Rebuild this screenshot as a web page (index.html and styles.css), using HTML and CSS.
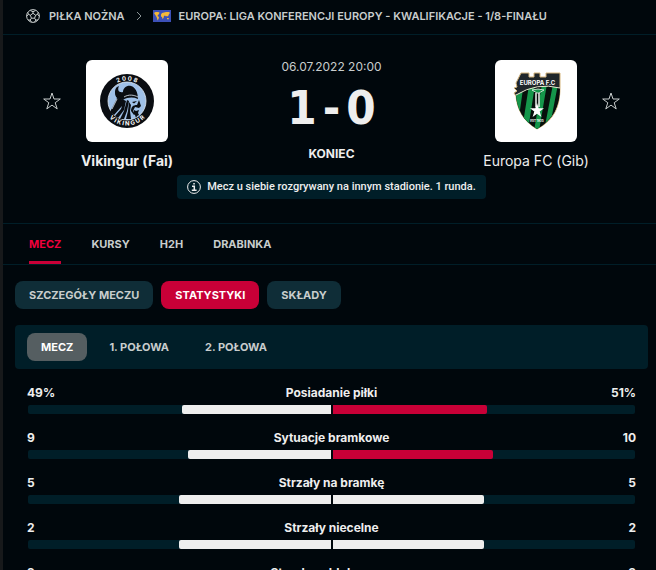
FILE: index.html
```html
<!DOCTYPE html>
<html lang="pl">
<head>
  <meta charset="UTF-8">
  <title>Vikingur (Fai) - Europa FC (Gib)</title>
  <meta name="viewport" content="width=device-width, initial-scale=1.0">
  <link rel="stylesheet" href="styles.css">
</head>
<body>
  <nav class="breadcrumb">
    <svg class="ball" viewBox="0 0 14 14" width="14" height="14" fill="none" stroke="currentColor">
      <circle cx="7" cy="7" r="6.4"/>
      <path d="M7 4.3l2.6 1.9-1 3H5.400l-1-3zM7 4.300V2.500M9.600 6.200l2-.8M8.600 9.200l1.200 1.900M5.400 9.200l-1.200 1.900M4.400 6.200l-2-.8M4.300 1.500L7 2.700l2.700-1.200M12.200 3.300l-.6 2.100 1.600 1.800M12 11l-2.200.1L8.500 13.200M5.500 13.200l-1.300-2.100L2 11M.8 7.200l1.600-1.800-.6-2.100"/>
    </svg>
    <a href="#">PIŁKA NOŻNA</a>
    <svg class="arrow" viewBox="0 0 6 10" width="6" height="10" fill="none" stroke="currentColor"><path d="M1 1l4 4-4 4"/></svg>
    <svg class="flag" viewBox="0 0 18 12" width="18" height="12">
      <rect width="18" height="12" fill="#3c50b8"/>
      <path fill="#f5b93a" d="M1 3l1.500-1H5l1.500.5L6 4 5 5l-.5 1 1.500 1-.5 2-1 1.500L4 8 3 6 2 4.500zM8 4.500l1-1.500 2-.5 2-.5h3l1 1-1 1-.5 1.500-1 1-1-.5-.5.500-1-1L11 6l-.5 2-1 1L9 7 8 6.500zM14 8h1.500l.5 1-1 .5-1-.5z"/>
    </svg>
    <a href="#">EUROPA: LIGA KONFERENCJI EUROPY - KWALIFIKACJE - 1/8-FINAŁU</a>
  </nav>

  <header class="match">
    <div class="duel">
      <button class="star" type="button" aria-label="Vikingur">
        <svg viewBox="0 0 18 18" width="18" height="18"><path d="M9 1l2 6h6.300l-5.100 3.700 2 6.200L9 13.100l-5.200 3.800 2-6.200L.7 7H7z"/></svg>
      </button>
      <div class="team home">
        <div class="logo">
          <svg viewBox="0 0 82 82" width="82" height="82">
            <circle cx="41" cy="41" r="27" fill="#0a0d12"/>
            <circle cx="41" cy="41" r="19" fill="#9fc0e8" stroke="#e4eef8" stroke-width=".8"/>
            <!-- helmet and horn -->
            <path fill="#0a0d12" d="M33 26c-2 4 0 7 4 6 0-4 4-7 8-6 4 1 7 6 7 13-5-2-10-2-15 1-5 0-8-3-8-7s1-6 4-7z"/>
            <!-- hair -->
            <path fill="#0a0d12" d="M31 38l7 2-2 6-8 9-4-3zM38 40l2 1-2 9-6 8-3-2 6-7zM41 40l2 1-2 10-3 8h-4l4-8zM43 42l2 3-1 6 1 8h-5l2-8z"/>
            <!-- face and beard -->
            <path fill="#0a0d12" d="M46 42l5-1-3 2.500zM53 40l2 6-2 2-4-1-2 4 1 4-3-4c0-4 2-6 6-6zM48 50l2 1 3-1-1 3 1 2-2 1-1 2-1-3-2-1z"/>
            <path fill="none" stroke="#e4eef8" stroke-width=".8" d="M38 37c5-3 10-2 14 0M31 39l-5 10"/>
            <path id="ringTop" d="M20.500 41a20.500 20.500 0 0 1 41 0" fill="none"/>
            <path id="ringBottom" d="M16.500 41a24.500 24.500 0 0 0 49 0" fill="none"/>
            <text class="ring-text"><textPath href="#ringTop" startOffset="50%" text-anchor="middle">2 0 0 8</textPath></text>
            <text class="ring-text"><textPath href="#ringBottom" startOffset="50%" text-anchor="middle">V I K I N G U R</textPath></text>
          </svg>
        </div>
        <a class="name" href="#">Vikingur (Fai)</a>
      </div>
      <div class="result">
        <div class="date">06.07.2022 20:00</div>
        <div class="score"><span>1</span><span>-</span><span>0</span></div>
        <div class="status">KONIEC</div>
      </div>
      <div class="team">
        <div class="logo">
          <svg viewBox="0 0 82 82" width="82" height="82">
            <clipPath id="shield"><path d="M21 35Q42 22 65 28C65 46 58 60 42 69 28 61 22 49 21 35z"/></clipPath>
            <path d="M26 13h8v4h5v-4h6v4h6v-4h14v14c0 20-6 33-23 42C28 61 22 49 21 36l-2-3 3-2-3-3 3-1-1-4z" fill="#20262a" stroke="#d6b57c" stroke-width="1"/>
            <g clip-path="url(#shield)">
              <path fill="#07100c" d="M18 22h50v48H18z"/>
              <path fill="#15964a" d="M22 29h6l-4 28h-6zM34 25h6l-7 45h-6zM47 24h5l-8 47h-5zM58 24h5l-9 47h-5zM69 26h5l-8 40h-5z"/>
            </g>
            <path fill="none" stroke="#eee6d2" d="M21 35Q42 22 65 28"/>
            <path fill="#15964a" stroke="#eef2ee" stroke-width=".8" d="M37 30q6-2 12 0l-5 3h-2z"/>
            <path fill="none" stroke="#eef2ee" stroke-width="1.500" d="M41 33v14M44 33v14"/>
            <path fill="#fff" d="M42 43l1.700 5.300h5.300l-4.300 3.200 1.700 5.500-4.400-3.300-4.400 3.300 1.700-5.500-4.300-3.200h5.300z"/>
            <text class="crest-text" x="42.500" y="25" text-anchor="middle">EUROPA F.C</text>
            <text class="crest-year" x="42" y="62" text-anchor="middle">EST 1925</text>
          </svg>
        </div>
        <a class="name" href="#">Europa FC (Gib)</a>
      </div>
      <button class="star" type="button" aria-label="Europa FC">
        <svg viewBox="0 0 18 18" width="18" height="18"><path d="M9 1l2 6h6.300l-5.100 3.700 2 6.200L9 13.100l-5.200 3.800 2-6.200L.7 7H7z"/></svg>
      </button>
    </div>
    <div class="notice">
      <svg viewBox="0 0 14 14" width="14" height="14" fill="none" stroke="currentColor"><circle cx="7" cy="7" r="6.400"/><path stroke-width="1.500" d="M5 6.200h2.300v4M4.800 10.200h4.800M6.300 3.800h1.500"/></svg>
      <span>Mecz u siebie rozgrywany na innym stadionie. 1 runda.</span>
    </div>
  </header>

  <nav class="tabs">
    <a class="active" href="#">MECZ</a>
    <a href="#">KURSY</a>
    <a href="#">H2H</a>
    <a href="#">DRABINKA</a>
  </nav>

  <main>
    <div class="chips">
      <button type="button">SZCZEGÓŁY MECZU</button>
      <button class="active" type="button">STATYSTYKI</button>
      <button type="button">SKŁADY</button>
    </div>
    <div class="periods">
      <button class="active" type="button">MECZ</button>
      <button type="button">1. POŁOWA</button>
      <button type="button">2. POŁOWA</button>
    </div>

    <section class="stats">
      <div class="stat">
        <div class="values"><span>49%</span><span>Posiadanie piłki</span><span>51%</span></div>
        <div class="bars">
          <div class="bar left"><div class="fill" style="width: 49%"></div></div>
          <div class="bar right"><div class="fill win" style="width: 51%"></div></div>
        </div>
      </div>
      <div class="stat">
        <div class="values"><span>9</span><span>Sytuacje bramkowe</span><span>10</span></div>
        <div class="bars">
          <div class="bar left"><div class="fill" style="width: 47%"></div></div>
          <div class="bar right"><div class="fill win" style="width: 53%"></div></div>
        </div>
      </div>
      <div class="stat">
        <div class="values"><span>5</span><span>Strzały na bramkę</span><span>5</span></div>
        <div class="bars">
          <div class="bar left"><div class="fill" style="width: 50%"></div></div>
          <div class="bar right"><div class="fill" style="width: 50%"></div></div>
        </div>
      </div>
      <div class="stat">
        <div class="values"><span>2</span><span>Strzały niecelne</span><span>2</span></div>
        <div class="bars">
          <div class="bar left"><div class="fill" style="width: 50%"></div></div>
          <div class="bar right"><div class="fill" style="width: 50%"></div></div>
        </div>
      </div>
      <div class="stat">
        <div class="values"><span>2</span><span>Strzały zablokowane</span><span>3</span></div>
        <div class="bars">
          <div class="bar left"><div class="fill" style="width: 40%"></div></div>
          <div class="bar right"><div class="fill win" style="width: 60%"></div></div>
        </div>
      </div>
    </section>
  </main>
</body>
</html>
```

FILE: styles.css
```css
* { box-sizing: border-box; }
html { background: #00070c; overflow-x: hidden; scrollbar-width: none; }
body { margin: 0; min-height: 100vh; border-left: 3px solid #17191b; font-family: Inter, "Liberation Sans", sans-serif; font-size: 12px; line-height: 16px; color: #eee; background: #00070c; }
a { color: inherit; text-decoration: none; }
button { font: inherit; color: inherit; border: 0; padding: 0; background: none; cursor: pointer; }
svg { display: block; flex: none; }

.breadcrumb { display: flex; align-items: center; height: 35px; padding: 0 8px 3px 23px; border-bottom: 1px solid #001e28; font-size: 11px; font-weight: 600; color: #c8cdcd; white-space: nowrap; }
.ball { margin-right: 9px; }
.arrow { margin: 0 11px; color: #8b9496; }
.flag { margin-right: 8px; }

.match { padding: 25px 8px 24px 12px; border-bottom: 1px solid #001e28; }
.duel { display: grid; grid-template-columns: 18px 132px 1fr 132px 18px; padding: 0 28px; }
.star { align-self: start; margin-top: 32px; }
.star svg { fill: none; stroke: #c8cdcd; stroke-width: 1; }
.team { display: flex; flex-direction: column; align-items: center; }
.logo { width: 82px; height: 82px; border-radius: 6px; background: #fff; overflow: hidden; }
.name { margin-top: 9px; font-size: 14px; line-height: 20px; white-space: nowrap; }
.home .name { font-weight: 700; }
.ring-text { font-size: 6px; font-weight: 700; fill: #fff; }
.crest-text { font-size: 6px; font-weight: 700; fill: #fff; }
.crest-year { font-size: 3px; font-weight: 700; fill: #fff; }

.result { display: flex; flex-direction: column; align-items: center; }
.date { line-height: 14px; color: #c8cdcd; }
.score { display: flex; align-items: center; gap: 6px; height: 68px; font-family: "DejaVu Sans Condensed", "DejaVu Sans", sans-serif; font-size: 47px; font-weight: 700; line-height: 48px; }
.status { margin-top: 4px; font-weight: 700; }
.notice { display: flex; align-items: center; gap: 6px; width: fit-content; height: 24px; margin: 4px auto 0; padding: 0 10px; border-radius: 4px; background: #001e28; font-family: Roboto, sans-serif; font-size: 11px; font-weight: 500; }

.tabs { display: flex; gap: 30px; height: 41px; padding: 0 26px; border-bottom: 1px solid #001e28; font-size: 11px; font-weight: 700; line-height: 40px; color: #c8cdcd; }
.tabs .active { color: #f0003c; border-bottom: 3px solid #c80037; }

main { padding: 16px 8px 0 12px; }
.chips, .periods { display: flex; gap: 8px; font-size: 11px; font-weight: 700; color: #c8cdcd; }
.chips button, .periods button { height: 28px; padding: 0 14px; border-radius: 8px; }
.chips button { background: #0f2d37; }
.chips .active { color: #fff; background: #c80037; }
.periods { margin-top: 16px; padding: 8px 12px; border-radius: 4px; background: #001e28; }
.periods .active { color: #fff; background: #555e61; }

.stats { padding: 16px 12px 0; }
.stat { height: 45px; }
.values { display: grid; grid-template-columns: 1fr auto 1fr; font-weight: 700; }
.values span:last-child { text-align: right; }
.bars { display: grid; grid-template-columns: 1fr 1fr; gap: 2px; margin-top: 4px; padding: 0 1px; }
.bar { display: flex; height: 9px; background: #001e28; }
.left { justify-content: flex-end; border-radius: 2px 0 0 2px; }
.right { border-radius: 0 2px 2px 0; }
.fill { background: #eee; border-radius: inherit; }
.win { background: #c80037; }
```
